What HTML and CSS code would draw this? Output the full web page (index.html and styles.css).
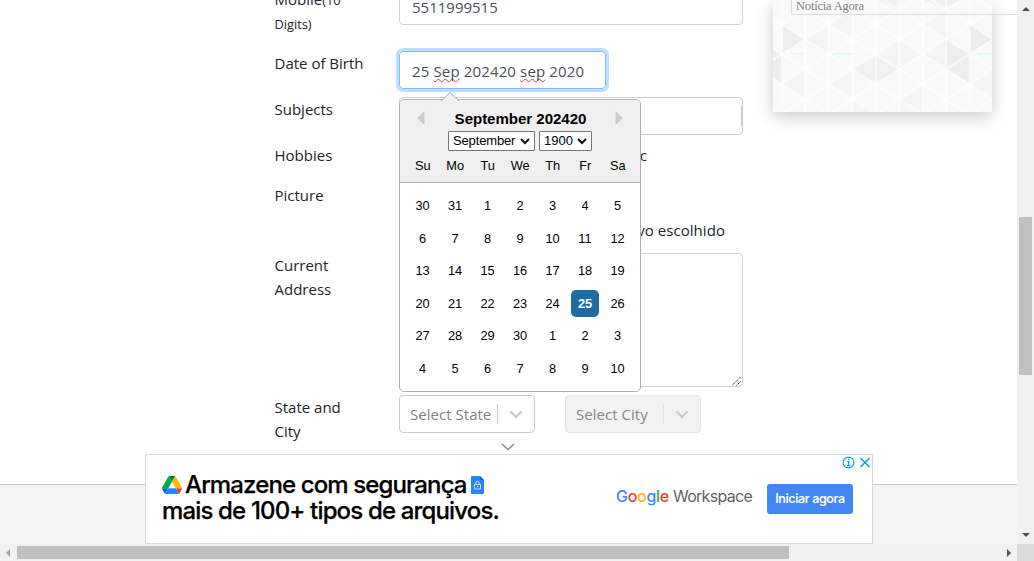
FILE: index.html
```html
<!DOCTYPE html>
<html lang="pt-BR">
<head>
<meta charset="utf-8">
<title>Student Registration Form</title>
<link rel="stylesheet" href="styles.css">
<script src="calendar.js" defer></script>
</head>
<body>
<div class="window">
  <main class="viewport">
    <div class="page">
      <form class="form">
        <div class="row row-mobile">
          <div class="label"><span>Mobile<small>(10</small></span><br><small class="digits">Digits)</small></div>
          <div class="control"><div class="input wide phone">5511999515</div></div>
        </div>
        <div class="row row-field">
          <div class="label"><span>Date of Birth</span></div>
          <div class="control">
            <div class="input date"><span>25 <u>Sep</u> 202420 <u>sep</u> 2020</span></div>
            <div class="popper">
              <svg class="pointer" width="18" height="9" viewBox="0 0 18 9"><path d="M0 9 L9 .5 L18 9" fill="#f0f0f0" stroke="#aeaeae"/></svg>
              <div class="cal-head">
                <div class="cal-title">
                  <svg width="8" height="14" viewBox="0 0 8 14"><path d="M7.5 0v14L0 7z" fill="#ccc"/></svg>
                  <strong>September 202420</strong>
                  <svg width="8" height="14" viewBox="0 0 8 14"><path d="M.5 0v14L8 7z" fill="#ccc"/></svg>
                </div>
                <div class="cal-selects">
                  <div class="select month"><span>September</span><svg width="10" height="7" viewBox="0 0 10 7"><path d="M1 1l4 4 4-4" fill="none" stroke="#111" stroke-width="2"/></svg></div>
                  <div class="select year"><span>1900</span><svg width="10" height="7" viewBox="0 0 10 7"><path d="M1 1l4 4 4-4" fill="none" stroke="#111" stroke-width="2"/></svg></div>
                </div>
                <div class="weekdays"><span>Su</span><span>Mo</span><span>Tu</span><span>We</span><span>Th</span><span>Fr</span><span>Sa</span></div>
              </div>
              <div class="days" id="days"></div>
            </div>
          </div>
        </div>
        <div class="row row-field">
          <div class="label"><span>Subjects</span></div>
          <div class="control"><div class="input wide subjects"><i></i></div></div>
        </div>
        <div class="row row-hobbies">
          <div class="label"><span>Hobbies</span></div>
          <div class="control"><div class="hobby">c</div></div>
        </div>
        <div class="row row-picture">
          <div class="label"><span>Picture</span></div>
          <div class="control"><div class="file">vo escolhido</div></div>
        </div>
        <div class="row row-address">
          <div class="label"><span>Current</span><br><span>Address</span></div>
          <div class="control"><div class="textarea"><svg width="9" height="9" viewBox="0 0 9 9"><path d="M0 8.5L8.5 0M4.5 8.5L8.5 4.5" stroke="#444" stroke-dasharray="1.5 .6" fill="none"/></svg></div></div>
        </div>
        <div class="row">
          <div class="label"><span>State and</span><br><span>City</span></div>
          <div class="control dropdowns">
            <div class="dropdown"><span>Select State</span><i></i><svg width="14" height="9" viewBox="0 0 14 9"><path d="M2 2l5 5 5-5" fill="none" stroke="#ccc" stroke-width="2.3" stroke-linecap="round"/></svg></div>
            <div class="dropdown disabled"><span>Select City</span><i></i><svg width="14" height="9" viewBox="0 0 14 9"><path d="M2 2l5 5 5-5" fill="none" stroke="#ccc" stroke-width="2.3" stroke-linecap="round"/></svg></div>
          </div>
        </div>
      </form>
      <aside class="side">
        <svg class="pattern" width="219" height="112" viewBox="0 0 219 112">
          <defs><pattern id="tri" width="47" height="30" patternUnits="userSpaceOnUse" patternTransform="translate(8.7 24.3)">
            <path d="M0 0v30M23.5 0v30M47 0v30M0 0L23.5 15L47 0M0 30L23.5 15L47 30" fill="none" stroke="#fff" stroke-opacity=".85" stroke-width="1.3"/></pattern></defs>
          <rect width="219" height="112" fill="#f9f9f9"/>
          <path fill="#eeeeee" d="M9 24v30l23-15zM197 24v30l22-15zM173 39v30l24-15zM197 54v30l-24-15zM0 50l9 4-9 5zM9 54v30l-9-6V60z"/>
          <path fill="#f2f2f2" d="M79 69l24-15 23 15-23 15zM150 0h23v9zM173 9V0h15zM103 0h23v9zM9 0v-6l14 6z"/>
          <path fill="#f5f5f5" d="M79 99l24 13H79zM126 39v30l24-15zM103 54l23-15v30zM32 39l24-15v30zM56 84l23 15v-30zM150 54l23-15v30zM9 84l23-15v30zM150 24l23-15v30zM197 84l22-15v30zM126 99l24-15v28h-24zM56 24l23-15v30z"/>
          <rect width="219" height="112" fill="url(#tri)"/>
          <path d="M17 54h14M59 54h20M204 54h15" stroke="#e4fafa" stroke-width="2"/>
        </svg>
        <div class="caption"><span>Notícia Agora</span></div>
      </aside>
    </div>
    <footer class="footer"></footer>
    <svg class="collapse" width="14" height="8" viewBox="0 0 14 8"><path d="M1 1l6 5.500L13 1" fill="none" stroke="#888" stroke-width="1.300"/></svg>
    <section class="banner">
      <div class="headline">
        <div class="line"><svg width="20" height="18" viewBox="0 0 87 78"><path d="M6.600 66.900l3.800 6.600c.8 1.400 2 2.500 3.300 3.300L27.500 53H0c0 1.500.4 3.100 1.200 4.500z" fill="#0066da"/><path d="M43.600 25L29.900 1.200c-1.300.8-2.500 1.900-3.300 3.300L1.200 48.500C.4 49.900 0 51.500 0 53h27.500z" fill="#00ac47"/><path d="M73.600 76.800c1.300-.8 2.500-1.900 3.300-3.300l9.300-16c.8-1.400 1.200-3 1.200-4.500H59.800l5.800 11.500z" fill="#ea4335"/><path d="M43.600 25L57.400 1.200C56 .4 54.500 0 52.900 0H34.400c-1.600 0-3.200.4-4.500 1.200z" fill="#00832d"/><path d="M59.800 53H27.500L13.700 76.800c1.400.8 2.900 1.200 4.500 1.200h50.900c1.600 0 3.100-.4 4.500-1.200z" fill="#2684fc"/><path d="M73.400 26.500L60.700 4.500c-.8-1.400-2-2.500-3.300-3.300L43.600 25l16.200 28h27.500c0-1.500-.4-3.100-1.200-4.500z" fill="#ffba00"/></svg><span class="h1">Armazene com segurança</span><svg width="13" height="18" viewBox="0 0 13 18"><path d="M1 0h8l4 4v13a1 1 0 0 1-1 1H1a1 1 0 0 1-1-1V1a1 1 0 0 1 1-1z" fill="#2684fc"/><path d="M9 0l4 4H9z" fill="#1769d6"/><path d="M3.500 8.500h6v4.500h-6zM4.800 8.500V7a1.700 1.700 0 0 1 3.400 0v1.500M6.500 10v1.500" fill="none" stroke="#d7e9ff" stroke-width=".9"/></svg></div>
        <div class="line"><span class="h2">mais de 100+ tipos de arquivos.</span></div>
      </div>
      <div class="brand"><span class="google"><b class="blue">G</b><b class="red">o</b><b class="yellow">o</b><b class="blue">g</b><b class="green">l</b><b class="red">e</b></span><span class="workspace">Workspace</span></div>
      <div class="cta"><span>Iniciar agora</span></div>
      <div class="adchoices"><svg width="28" height="13" viewBox="0 0 28 13"><g fill="none" stroke="#00aecd" stroke-width="1.200"><circle cx="6.500" cy="6.500" r="5.400"/><path d="M18.500 2l9 9M27.500 2l-9 9" stroke-width="1.500"/><path d="M5.200 5.700h1.500v4M5 9.700h3.300M6 3.500h1.300" stroke-width="1.300"/></g></svg></div>
    </section>
  </main>
  <div class="vbar"><svg width="8" height="4" viewBox="0 0 8 4"><path d="M0 4l4-4 4 4z" fill="#505050"/></svg><div class="vthumb"></div><svg class="down" width="8" height="4" viewBox="0 0 8 4"><path d="M0 0l4 4 4-4z" fill="#505050"/></svg></div>
  <div class="hbar"><svg width="4" height="8" viewBox="0 0 4 8"><path d="M4 0v8L0 4z" fill="#a3a3a3"/></svg><div class="hthumb"></div><svg class="right" width="4" height="8" viewBox="0 0 4 8"><path d="M0 0v8l4-4z" fill="#505050"/></svg></div>
  <div class="corner"></div>
</div>
</body>
</html>
```
FILE: styles.css
```css
* { box-sizing: border-box; }
body { margin: 0; overflow: hidden; background: #fff; font-family: "Open Sans", "Noto Sans", sans-serif; font-size: 15px; line-height: 24px; color: #212529; }
svg { display: block; flex: none; }
i { font-style: normal; }

.window { display: grid; grid-template-columns: 1017px 17px; grid-template-rows: 544px 17px; width: 1034px; height: 561px; }
.viewport { position: relative; overflow: hidden; display: flex; flex-direction: column; }
.page { display: flex; height: 484px; flex: none; }
.footer { height: 60px; background: #f4f4f4; border-top: 1px solid #c9c9c9; }

.form { width: 469px; margin: -13px 0 0 274px; }
.row { display: flex; }
.row-mobile { height: 64px; }
.row-field { height: 46px; }
.row-hobbies { height: 40px; }
.row-picture { height: 70px; }
.row-address { height: 142px; }
.label { width: 125px; flex: none; padding-left: .5px; letter-spacing: 0; white-space: nowrap; }
.label small { font-size: 12.800px; }
.label .digits { position: relative; top: -1px; }
.control { position: relative; width: 344px; white-space: nowrap; }
.input { height: 38px; padding: 6px 12px; border: 1px solid #ced4da; border-radius: 4px; color: #495057; letter-spacing: .14px; }
.phone { padding-top: 7px; letter-spacing: 0; }
.date { width: 207px; padding-top: 7px; border-color: #80bdff; box-shadow: 0 0 0 3px #bfdeff; }
.date u { text-decoration: underline wavy #e33 1px; text-underline-offset: 1px; text-decoration-skip-ink: none; }
.subjects { display: flex; justify-content: flex-end; padding: 8px 0; border-color: #ccc; }
.subjects i { width: 1px; height: 20px; background: #ccc; }
.hobby { width: 248px; text-align: right; }
.file { padding: 35px 18px 0 0; text-align: right; letter-spacing: .05px; }
.textarea { height: 134px; border: 1px solid #ced4da; border-radius: 4px; display: flex; justify-content: flex-end; align-items: flex-end; padding: 0 1px; }

.dropdowns { display: flex; gap: 30px; }
.dropdown { width: 136px; height: 38px; padding: 0 11px 0 10px; display: flex; align-items: center; border: 1px solid #ccc; border-radius: 4px; color: #808080; letter-spacing: .03px; }
.dropdown span { width: 88px; }
.dropdown i { width: 1px; height: 20px; margin-right: 11px; background: #ccc; }
.dropdown.disabled { background: #f2f2f2; border-color: #e6e6e6; color: #888; }
.dropdown.disabled i { background: #e2e2e2; }

.popper { position: absolute; z-index: 2; left: 0; top: 48px; width: 242px; height: 293px; background: #fff; border: 1px solid #aeaeae; border-radius: 5px; font: 12.800px/27px "Liberation Sans", Arial, sans-serif; color: #000; }
.pointer { position: absolute; left: 41px; top: -8px; }
.cal-head { height: 83px; padding-top: 8px; background: #f0f0f0; border-bottom: 1px solid #aeaeae; border-radius: 4px 4px 0 0; }
.cal-title { display: flex; justify-content: space-between; align-items: center; height: 22px; padding: 0 17px; }
.cal-title strong { font-size: 15.100px; line-height: 22px; padding-left: 1px; letter-spacing: -.05px; }
.cal-title svg { margin-bottom: 3px; }
.cal-selects { display: flex; justify-content: center; gap: 4px; height: 20px; margin-top: 1px; }
.select { display: flex; align-items: center; justify-content: space-between; height: 20px; padding: 0 4px; border: 1px solid #767676; border-radius: 1px; background: #fff; font-size: 13px; line-height: 18px; }
.month { width: 87px; letter-spacing: -.15px; }
.year { width: 53px; }
.weekdays { display: grid; grid-template-columns: repeat(7, 32.500px); padding-left: 6.500px; text-align: center; margin-top: 1px; }
.days { display: grid; grid-template-columns: repeat(7, 27.200px); grid-auto-rows: 27.200px; gap: 5.310px; padding: 9.400px 0 0 9px; text-align: center; }
.days .selected { background: #216ba5; border-radius: 5px; color: #fff; font-weight: 700; }

.side { position: relative; width: 219px; height: 112px; margin-left: 30px; box-shadow: 0 5px 16px rgba(0,0,0,.2); }
.caption { position: absolute; left: 18px; top: -10px; width: 230px; height: 25px; padding-left: 4px; border: 1px solid #dedee0; font: 12.500px/30px "Liberation Serif", serif; color: #808080; letter-spacing: -.2px; }

.collapse { position: absolute; left: 500.500px; top: 443px; }
.banner { position: absolute; left: 145px; top: 454px; width: 728px; height: 90px; display: flex; border: 1px solid #d9d9d9; background: #fff; white-space: nowrap; }
.headline { width: 470px; padding: 17px 0 0 16px; font: 500 24px/26px Inter, sans-serif; color: #000; }
.line { display: flex; align-items: center; height: 26px; }
.h1 { margin: 0 4px 0 3px; letter-spacing: -.88px; }
.h2 { letter-spacing: -.84px; }
.h1, .h2 { -webkit-text-stroke: .25px #000; }
.brand { display: flex; gap: 4px; width: 151px; padding-top: 28px; font: 16px/26px Inter, sans-serif; color: #5f6368; }
.google b { font-weight: 500; }
.google { letter-spacing: -.3px; }
.workspace { letter-spacing: -.7px; }
.blue { color: #4285f4; } .red { color: #ea4335; } .yellow { color: #fbbc04; } .green { color: #34a853; }
.cta { width: 86px; height: 30px; margin-top: 29px; border-radius: 3px; background: #4285f4; color: #fff; text-align: center; font: 500 12.500px/30px Inter, sans-serif; letter-spacing: -.35px; -webkit-text-stroke: .2px #fff; }
.adchoices { position: absolute; top: 1px; right: 2px; }

.vbar { display: flex; flex-direction: column; align-items: center; background: #f1f1f1; padding-top: 7px; }
.vthumb { width: 13px; height: 158px; margin-top: 206px; background: #c1c1c1; }
.down { margin-top: auto; margin-bottom: 7px; }
.hbar { display: flex; align-items: center; background: #f1f1f1; padding-left: 6px; }
.hthumb { width: 772px; height: 13px; margin-left: 7px; background: #c1c1c1; }
.right { margin-left: auto; margin-right: 6px; }
.corner { background: #dcdcdc; }
```
FILE: calendar.js
```js
// Six weeks beginning on August 30.
const grid = document.getElementById('days');
for (let i = 0; i < 42; i++) {
  const day = document.createElement('span');
  day.textContent = i < 2 ? 30 + i : i < 32 ? i - 1 : i - 31;
  if (i === 26) day.className = 'selected';
  grid.append(day);
}
```
